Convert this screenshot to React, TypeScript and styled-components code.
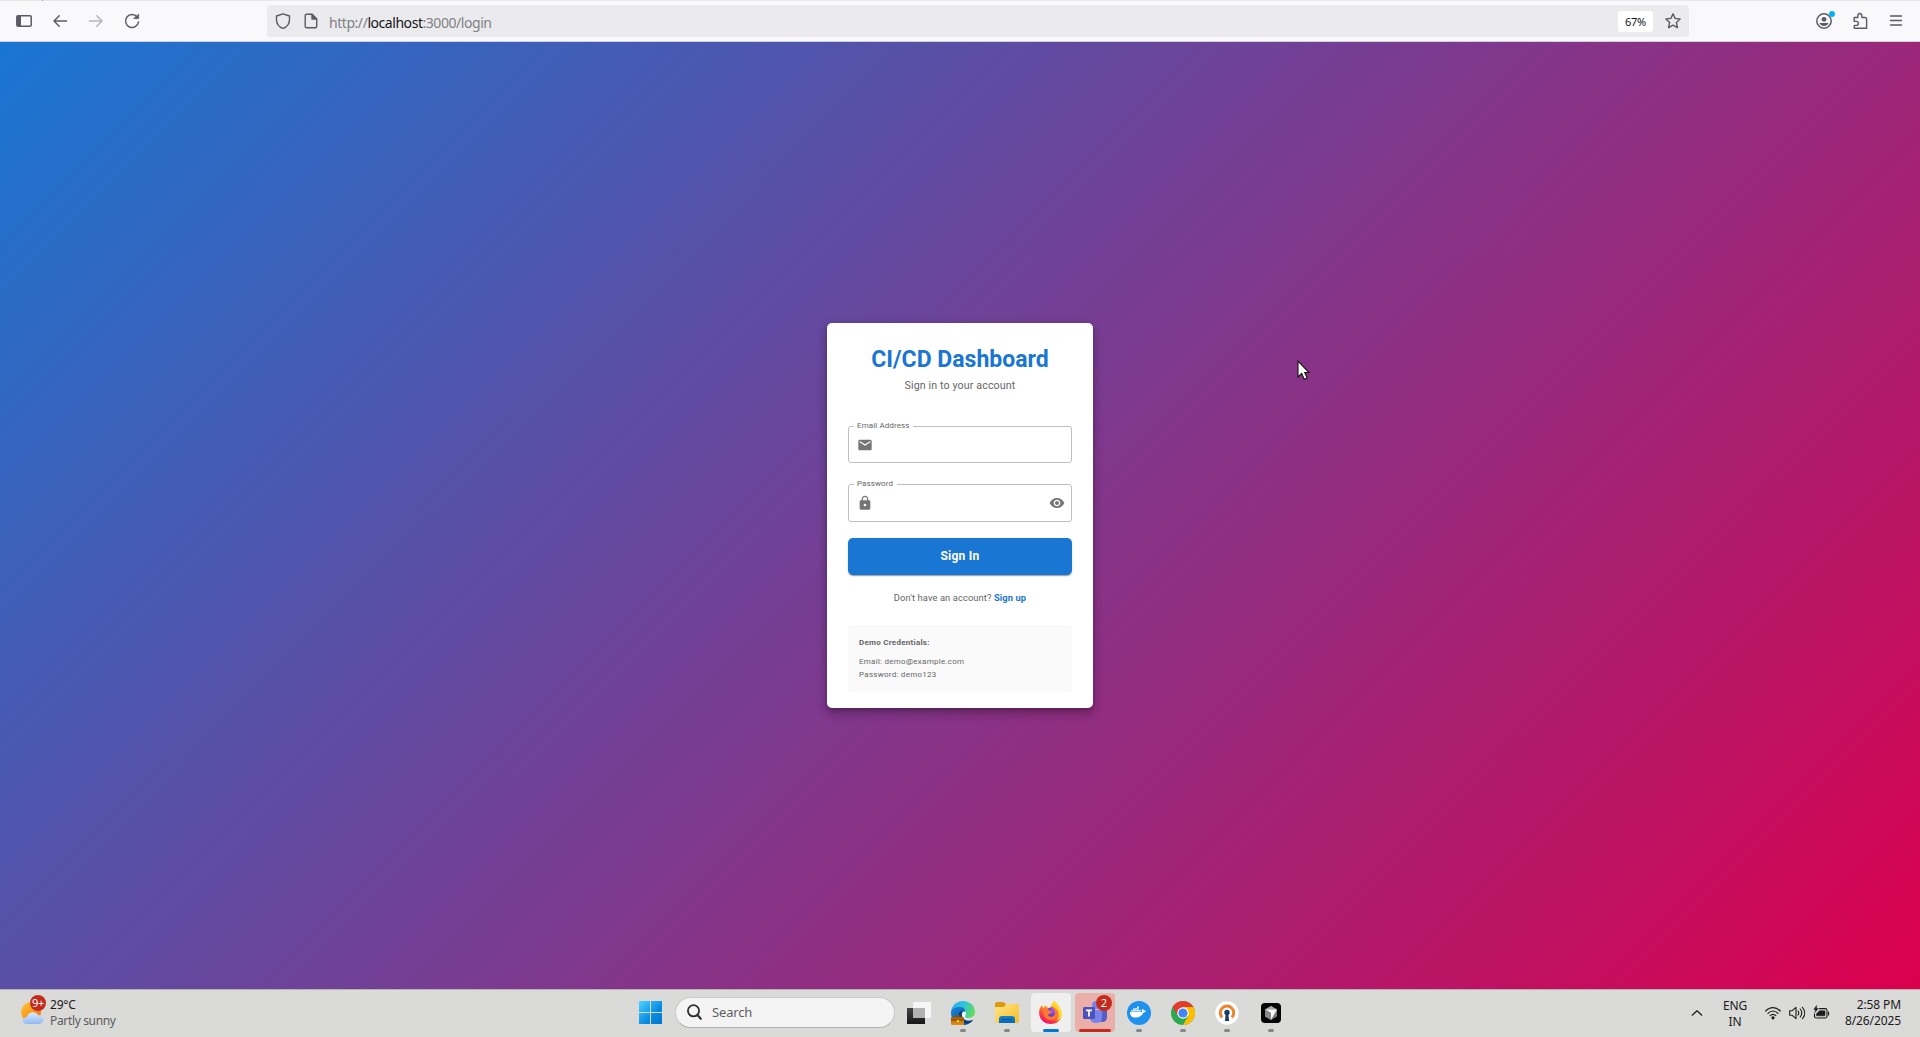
import React from 'react';
import styled, { createGlobalStyle } from 'styled-components';
import { MdEmail, MdLock, MdVisibility } from 'react-icons/md';
import { FaDocker } from 'react-icons/fa';

const Global = createGlobalStyle`
  * { box-sizing: border-box; }
  body { margin: 0; overflow: hidden; font-family: "Noto Sans", "Open Sans", sans-serif; }
  svg { display: block; flex: none; overflow: visible; }
`;

const Desktop = styled.div`
  display: flex;
  flex-direction: column;
  width: 1920px;
  height: 1037px;
  position: relative;
`;

/* ---------- browser toolbar ---------- */
const Toolbar = styled.header`
  display: flex;
  align-items: center;
  height: 42px;
  padding: 1px 14px 0;
  background:
    linear-gradient(#a8a8ad, #a8a8ad) 42px 0 / 1px 1px no-repeat,
    linear-gradient(#e8e8ec, #e8e8ec) 0 0 / 100% 1px no-repeat,
    #f9f9fb;
  border-bottom: 1px solid #d2d2d8;
  color: #5b5b66;
`;
const NavGroup = styled.div`
  display: flex;
  gap: 16px;
  width: 253px;
`;
const NavIcon = styled.span<{ $dim?: boolean }>`
  display: grid;
  place-items: center;
  width: 20px;
  height: 20px;
  opacity: ${p => (p.$dim ? 0.42 : 1)};
`;
const UrlBar = styled.div`
  display: flex;
  align-items: center;
  width: 1422px;
  height: 32px;
  padding: 0 8px;
  border-radius: 4px;
  background: #ebebed;
`;
const UrlIcons = styled.div`
  display: flex;
  gap: 12px;
  width: 54px;
`;
const Url = styled.span`
  flex: 1;
  color: #818187;
  font-size: 14px;
  line-height: 20px;
  letter-spacing: -0.45px;
  padding-top: 3px;
  white-space: nowrap;
  b { font-weight: 400; color: #15141a; }
`;
const ZoomLevel = styled.span`
  width: 35px;
  height: 21px;
  margin-right: 12px;
  border-radius: 3px;
  background: #fff;
  color: #15141a;
  font-size: 11px;
  line-height: 22px;
  text-align: center;
  letter-spacing: -0.3px;
`;
const ToolActions = styled.div`
  display: flex;
  gap: 16px;
  margin-left: auto;
`;

/* ---------- login page ---------- */
const Page = styled.main`
  display: flex;
  justify-content: center;
  align-items: center;
  height: 947px;
  background: linear-gradient(135deg, #1976d2 0%, #dc004e 100%);
  font-family: Roboto, sans-serif;
`;
const Card = styled.section`
  display: flex;
  flex-direction: column;
  width: 266px;
  height: 385px;
  padding: 23px 21px 0;
  border-radius: 5px;
  background: #fff;
  box-shadow: 0 3px 4px -2px rgba(0,0,0,.2), 0 6px 8px 1px rgba(0,0,0,.16), 0 2px 10px 1px rgba(0,0,0,.13);
`;
const Title = styled.h1`
  margin: 0;
  color: #1976d2;
  font-size: 23px;
  line-height: 28px;
  font-weight: 700;
  text-align: center;
  white-space: nowrap;
`;
const Subtitle = styled.p`
  margin: 4px 0 32px;
  color: #666;
  font-size: 10.67px;
  line-height: 16px;
  letter-spacing: 0.12px;
  text-align: center;
`;
const Field = styled.div<{ $height: number }>`
  display: flex;
  justify-content: space-between;
  align-items: center;
  position: relative;
  height: ${p => p.$height}px;
  padding: 0 6px 0 8px;
  margin-bottom: 21px;
  border: 1px solid #c0c0c0;
  border-radius: 3px;
  color: #757575;
`;
const FieldLabel = styled.label`
  position: absolute;
  top: -7px;
  left: 5px;
  padding: 0 4px 0 3px;
  background: #fff;
  color: #666;
  font-size: 8px;
  line-height: 12px;
  letter-spacing: 0.1px;
  white-space: nowrap;
`;
const SubmitButton = styled.button`
  height: 37px;
  margin: -5px 0 0;
  padding: 0 0 2px;
  border: 0;
  border-radius: 5px;
  background: #1976d2;
  box-shadow: 0 2px 1px -1px rgba(0,0,0,.2), 0 1px 1px rgba(0,0,0,.14), 0 1px 3px rgba(0,0,0,.12);
  color: #fff;
  font: 700 12px/18px Roboto, sans-serif;
  letter-spacing: 0.25px;
`;
const SignUpLine = styled.p`
  margin: 16px 0 20px;
  color: #666;
  font-size: 9.33px;
  line-height: 14px;
  letter-spacing: 0.1px;
  text-align: center;
  b { color: #1976d2; }
`;
const DemoBox = styled.div`
  height: 67px;
  padding: 11px;
  border-radius: 3px;
  background: #fafafa;
  color: #666;
  font-size: 8px;
  line-height: 13px;
  letter-spacing: 0.26px;
`;
const DemoHeading = styled.div`
  font-weight: 700;
  margin-bottom: 6px;
`;

/* ---------- taskbar ---------- */
const Taskbar = styled.footer`
  display: flex;
  align-items: center;
  justify-content: space-between;
  position: relative;
  height: 48px;
  padding-bottom: 2px;
  border-top: 1px solid #b4b1b2;
  background: #dadad9;
  color: #1b1b1b;
`;
const Weather = styled.div`
  display: flex;
  gap: 3px;
  width: 628px;
  padding: 0 0 1px 20px;
`;
const WeatherText = styled.div`
  font-size: 12px;
  line-height: 16px;
  letter-spacing: -0.2px;
  padding-top: 2px;
  span { display: block; color: #5c5c5c; letter-spacing: -0.35px; }
`;
const Apps = styled.div`
  display: flex;
  align-items: center;
  flex: 1;
  height: 45px;
`;
const AppButton = styled.div<{ $bg?: string }>`
  display: flex;
  align-items: center;
  justify-content: center;
  position: relative;
  width: 40px;
  height: 39px;
  margin: 0 2px;
  border-radius: 4px;
  background: ${p => p.$bg || 'transparent'};
`;
const Running = styled.i<{ $w?: number; $c?: string }>`
  position: absolute;
  bottom: 0;
  left: calc(50% - ${p => (p.$w || 6) / 2}px);
  width: ${p => p.$w || 6}px;
  height: 3px;
  border-radius: 2px;
  background: ${p => p.$c || '#868686'};
`;
const Badge = styled.span`
  position: absolute;
  top: 2px;
  right: 3px;
  width: 16px;
  height: 16px;
  border-radius: 50%;
  background: #c42b1c;
  color: #fff;
  font-size: 11px;
  line-height: 16px;
  text-align: center;
`;
const WeatherIcon = styled.div`
  position: relative;
  width: 27px;
  height: 34px;
`;
const WeatherBadge = styled(Badge)`
  top: 0;
  right: 1px;
  font-size: 11px;
  letter-spacing: -0.3px;
`;
const Search = styled.div`
  display: flex;
  align-items: center;
  gap: 10px;
  width: 220px;
  height: 31px;
  margin: 0 2px 0 3px;
  padding: 0 11px 1px;
  border: 1px solid #c9c9c9;
  border-bottom-color: #b2b2b2;
  border-radius: 16px;
  background: #f4f4f4;
  color: #5e5e5e;
  font-size: 13px;
  letter-spacing: -0.15px;
`;
const Tray = styled.div`
  display: flex;
  align-items: center;
  width: 231px;
  padding-right: 19px;
  font-size: 12px;
  line-height: 16px;
`;
const Chevron = styled.span`
  margin-left: 1px;
`;
const Language = styled.div`
  width: 40px;
  margin: 2px 10px 0 11px;
  text-align: center;
  letter-spacing: -0.2px;
`;
const Status = styled.div`
  display: flex;
  gap: 8px;
`;
const Clock = styled.div`
  flex: 1;
  text-align: right;
  letter-spacing: -0.1px;
  white-space: nowrap;
`;
const Pointer = styled.svg`
  position: absolute;
  left: 1297px;
  top: 360px;
`;

const Line = ({ size = 16, w = 1.4, children }: { size?: number; w?: number; children: React.ReactNode }) => (
  <svg width={size} height={size} viewBox="0 0 16 16" fill="none" stroke="currentColor" strokeWidth={w} strokeLinecap="round" strokeLinejoin="round">{children}</svg>
);

const EdgeIcon = () => (
  <svg width="26" height="26" viewBox="0 0 26 26">
    <defs>
      <linearGradient id="edgeTop" x1="0" x2="1" y1=".2" y2=".5"><stop stopColor="#28a9ee" /><stop offset=".5" stopColor="#2dc3dc" /><stop offset="1" stopColor="#65dc5d" /></linearGradient>
      <linearGradient id="edgeLow" x1="0" x2="1" y2="1"><stop stopColor="#1687d9" /><stop offset="1" stopColor="#0b4388" /></linearGradient>
      <linearGradient id="caseGold" x1="0" x2="0" y1="0" y2="1"><stop stopColor="#9e5906" /><stop offset=".4" stopColor="#c77708" /><stop offset="1" stopColor="#e09017" /></linearGradient>
    </defs>
    <path d="M1 13C1 6 6 1 13 1s12 5 12 11c0 4-3 6-7 6-3 0-5-1-4-3 1-5-6-7-10-4-2 1-3 2-3 2z" fill="url(#edgeTop)" />
    <path d="M1 13c0-4 4-6 8-6 5 0 7 3 6 6-4-1-6 3-3 6 3 4 9 2 11 1-2 3-6 5-10 5C6 25 1 20 1 13z" fill="url(#edgeLow)" />
    <path d="M9 13c-1 4 1 9 6 10 4 1 7-1 8-3-5 2-10 0-11-4 0-2 1-3 2-4-2-1-4-1-5 1z" fill="#083c76" />
    <path d="M12 15c-1-3 3-5 4-2 0 2-1 3-1 4 1 1 2 1 3 1-3 1-6 0-6-3z" fill="#e7f4fa" />
    <path d="M5 18v-2h5v2" fill="none" stroke="#89500b" strokeWidth="1.2" />
    <rect x="1" y="17" width="13" height="8" rx="1" fill="url(#caseGold)" /><path d="M1 20h13" stroke="#754007" /><rect x="7" y="20" width="2" height="2" fill="#ffdb1c" />
  </svg>
);
const FolderIcon = () => (
  <svg width="24" height="24" viewBox="0 0 24 24">
    <defs><linearGradient id="folder" x1="0" x2="1" y1="0" y2="1"><stop stopColor="#ffe48b" /><stop offset="1" stopColor="#f9bd20" /></linearGradient><linearGradient id="tray" x1="0" x2="0" y1="0" y2="1"><stop stopColor="#1184d4" /><stop offset="1" stopColor="#0b66b6" /></linearGradient></defs>
    <path d="M0 3q0-2 2-2h6l3 2h11q2 0 2 2v5H0z" fill="#dc9b0d" />
    <path d="M0 6h8q2 0 3-3h11q2 0 2 2v15q0 2-2 2H2q-2 0-2-2z" fill="url(#folder)" />
    <path d="M4 22v-4q0-3 3-3h10q3 0 3 3v4z" fill="url(#tray)" /><path d="M7 18.5h10" stroke="#0a5593" strokeWidth="1.2" />
  </svg>
);
const FirefoxIcon = () => (
  <svg width="24" height="24" viewBox="0 0 24 24">
    <defs><linearGradient id="fox" x1=".8" x2=".25" y1="0" y2="1"><stop stopColor="#fff13a" /><stop offset=".35" stopColor="#ffb51c" /><stop offset=".65" stopColor="#ff5034" /><stop offset="1" stopColor="#ed0872" /></linearGradient><radialGradient id="globe" cx=".6" cy=".3"><stop stopColor="#a756f6" /><stop offset="1" stopColor="#5541ba" /></radialGradient></defs>
    <path d="M15 0c3 2 4 4 5 6 6 8 1 17-8 17S-2 15 1 7l2-3 1 3 3-3c0 2 2 3 4 3 1-3 2-5 4-7z" fill="url(#fox)" />
    <circle cx="12.5" cy="12" r="5.7" fill="url(#globe)" />
    <path d="M4 8c3-1 5 0 7 2l2 1c-1 2-3 1-4 3 2 3 7 2 7-2 0-3-2-5-4-5 4-1 7 2 7 6 0 4-3 6-7 6-5 0-9-4-8-11z" fill="#ff7935" />
    <path d="M15 0c0 4 5 7 5 13 0 4-2 6-4 7 7-1 9-8 4-14-1-2-2-4-5-6z" fill="#ffdb32" />
  </svg>
);
const TeamsIcon = () => (
  <svg width="24" height="24" viewBox="0 0 24 24">
    <circle cx="13" cy="4" r="4" fill="#7b83eb" /><circle cx="20" cy="6" r="3" fill="#5059c9" />
    <path d="M15 9h9v7q0 5-5 5h-4z" fill="#555fca" /><path d="M7 9h12v8q0 5-6 5t-6-5z" fill="#7b83eb" />
    <rect x="0" y="6" width="12" height="12" rx="1.2" fill="#4b53bc" /><path d="M3 9.3h6M6 9.3v6.2" stroke="#fff" strokeWidth="1.7" />
  </svg>
);
const ChromeIcon = () => (
  <svg width="24" height="24" viewBox="0 0 24 24">
    <circle cx="12" cy="12" r="12" fill="#2da94f" /><path d="M1.6 6A12 12 0 0 1 22.4 6H12L7 15z" fill="#e33b2e" /><path d="M12 6h10.4A12 12 0 0 1 12 24l5.2-9z" fill="#fdbd00" /><circle cx="12" cy="12" r="5.8" fill="#fff" /><circle cx="12" cy="12" r="4.6" fill="#4285f4" />
  </svg>
);
const VpnIcon = () => (
  <svg width="24" height="24" viewBox="0 0 24 24"><circle cx="12" cy="12" r="11.7" fill="#fff" /><path d="M7.2 16.4A6.7 6.7 0 1 1 16.8 16.4" fill="none" stroke="#ed8533" strokeWidth="3" /><circle cx="12" cy="11.5" r="2.7" fill="#183b66" /><path d="m10.8 12-.9 8h4.2l-.9-8z" fill="#183b66" /></svg>
);
const CubeIcon = () => (
  <svg width="20" height="20" viewBox="0 0 20 20"><rect width="20" height="20" rx="4" fill="#050505" /><path d="m10 3 6 3.5v7L10 17l-6-3.5v-7z" fill="#777" /><path d="m4 6.5 6-3.5 6 3.5z" fill="#aaa" /><path d="M4 6.5h12L10 17v-7z" fill="#f5f5f5" /><path d="m4 6.5 6 3.5v7l-6-3.5z" fill="#898989" /></svg>
);

export default function App() {
  return (
    <Desktop>
      <Global />
      <Toolbar>
        <NavGroup>
          <NavIcon><svg width="16" height="12" viewBox="0 0 16 12"><rect x=".8" y=".8" width="14.4" height="10.4" rx="1.3" fill="none" stroke="currentColor" strokeWidth="1.5" /><path d="M1 1h4v10H1z" fill="currentColor" /></svg></NavIcon>
          <NavIcon><Line w={1.5}><path d="M14.5 8H2M7.2 2.8 2 8l5.2 5.2" /></Line></NavIcon>
          <NavIcon $dim><Line w={1.5}><path d="M1.5 8H14M8.8 2.8 14 8l-5.2 5.2" /></Line></NavIcon>
          <NavIcon><Line w={1.5}><path d="M13.2 4A6.5 6.5 0 1 0 14.5 9" /><path d="M14.6 1.5v4H10z" fill="currentColor" strokeWidth=".8" /></Line></NavIcon>
        </NavGroup>
        <UrlBar>
          <UrlIcons>
            <Line><path d="M8 .8 14.5 3v3.5C14.5 10.5 12 14 8 15.3 4 14 1.5 10.5 1.5 6.5V3z" /></Line>
            <Line><path d="M3.5 1.3H9L13.7 6v7.2q0 1.5-1.5 1.5H3.7q-1.5 0-1.5-1.5V2.8q0-1.5 1.3-1.5z" /><path d="M9 1.3V6h4.7z" fill="currentColor" /></Line>
          </UrlIcons>
          <Url>http://<b>localhost</b>:3000/login</Url>
          <ZoomLevel>67%</ZoomLevel>
          <Line><path d="m8 .8 2.1 4.6 5 .6-3.7 3.4 1 5.3L8 12.2l-4.4 2.5 1-5.3L.9 6l5-.6z" /></Line>
        </UrlBar>
        <ToolActions>
          <NavIcon><svg width="20" height="20" viewBox="0 0 20 20"><circle cx="10" cy="10" r="7.2" fill="none" stroke="currentColor" strokeWidth="1.5" /><circle cx="10" cy="8.3" r="2.4" fill="currentColor" /><path d="M5.5 12h9c-1 4-8 4-9 0z" fill="currentColor" /><circle cx="18" cy="3" r="3" fill="#00b3f4" /></svg></NavIcon>
          <NavIcon><Line><path d="M2.2 4.5h3.6V2.8c0-3 4-3 4 0v1.7h3.3q1.5 0 1.5 1.5v9.2H2.3v-2.8H4c3.2 0 3.2-4 0-4H2.2z" /></Line></NavIcon>
          <NavIcon><Line><path d="M2.5 3h11M2.5 7.5h11M2.5 12h11" /></Line></NavIcon>
        </ToolActions>
      </Toolbar>
      <Page>
        <Card>
          <Title>CI/CD Dashboard</Title>
          <Subtitle>Sign in to your account</Subtitle>
          <Field $height={37}><FieldLabel>Email Address</FieldLabel><MdEmail size={16} /></Field>
          <Field $height={38}><FieldLabel>Password</FieldLabel><MdLock size={16} /><MdVisibility size={16} /></Field>
          <SubmitButton>Sign In</SubmitButton>
          <SignUpLine>Don't have an account? <b>Sign up</b></SignUpLine>
          <DemoBox>
            <DemoHeading>Demo Credentials:</DemoHeading>
            <div>Email: demo@example.com</div>
            <div>Password: demo123</div>
          </DemoBox>
        </Card>
      </Page>
      <Taskbar>
        <Weather>
          <WeatherIcon>
            <svg width="27" height="34" viewBox="0 0 27 34">
              <defs><linearGradient id="sun" x1="0" x2="1" y1="0" y2="1"><stop stopColor="#ffc735" /><stop offset="1" stopColor="#f36c0a" /></linearGradient><linearGradient id="cloud" x1="0" x2="0" y1="0" y2="1"><stop stopColor="#d9ecff" /><stop offset="1" stopColor="#91b9f2" /></linearGradient></defs>
              <circle cx="11" cy="17" r="10" fill="url(#sun)" /><path d="M7 29c-6 0-5-7 0-7 1-6 9-6 11-2 7 0 7 9 0 9z" fill="url(#cloud)" />
            </svg>
            <WeatherBadge>9+</WeatherBadge>
          </WeatherIcon>
          <WeatherText>29°C<span>Partly sunny</span></WeatherText>
        </Weather>
        <Apps>
          <AppButton>
            <svg width="23" height="23" viewBox="0 0 23 23"><defs><linearGradient id="win" gradientUnits="userSpaceOnUse" x1="0" x2="23" y1="0" y2="23"><stop stopColor="#4ed2ff" /><stop offset=".6" stopColor="#098be0" /><stop offset="1" stopColor="#0075ce" /></linearGradient></defs><path d="M0 0h11v11H0zM12 0h11v11H12zM0 12h11v11H0zM12 12h11v11H12z" fill="url(#win)" /></svg>
          </AppButton>
          <Search>
            <svg width="15" height="16" viewBox="0 0 15 16" fill="none" stroke="#303030" strokeWidth="1.8" strokeLinecap="round"><circle cx="6.5" cy="6.8" r="5.6" /><path d="m10.5 11 3.3 3.7" strokeWidth="2.2" /></svg>
            Search
          </Search>
          <AppButton><svg width="24" height="24" viewBox="0 0 24 24"><defs><linearGradient id="dark" x2="0" y2="1"><stop stopColor="#444" /><stop offset="1" stopColor="#171717" /></linearGradient></defs><path d="M0 7h18v16H0z" fill="url(#dark)" /><path d="M6 1h18v16H6z" fill="#fff" opacity=".75" /><path d="M6 7h12v10H6z" fill="#aaa" opacity=".8" /></svg></AppButton>
          <AppButton><EdgeIcon /><Running /></AppButton>
          <AppButton><FolderIcon /><Running /></AppButton>
          <AppButton $bg="#efefef"><FirefoxIcon /><Running $w={16} $c="#0078d4" /></AppButton>
          <AppButton $bg="#eaafa9"><TeamsIcon /><Running $w={32} $c="#c42b1c" /><Badge>2</Badge></AppButton>
          <AppButton><svg width="24" height="24"><circle cx="12" cy="12" r="12" fill="#1d91ed" /><FaDocker x="3" y="3" width="18" height="18" color="#fff" /></svg><Running /></AppButton>
          <AppButton><ChromeIcon /><Running /></AppButton>
          <AppButton><VpnIcon /><Running /></AppButton>
          <AppButton><CubeIcon /><Running /></AppButton>
        </Apps>
        <Tray>
          <Chevron><Line size={14}><path d="m2.5 10.5 5.5-5 5.5 5" /></Line></Chevron>
          <Language>ENG<br />IN</Language>
          <Status>
            <Line w={1.2}><path d="M.8 6c4-4.5 10.4-4.5 14.4 0M3 8.4c3-3.2 7-3.2 10 0M5.2 10.7c1.8-1.8 3.8-1.8 5.6 0" /><circle cx="8" cy="12.8" r="1" fill="currentColor" /></Line>
            <Line w={1.1}><path d="M.7 5.7h2.5L7 2.4v11.2l-3.8-3.3H.7zM9 6c1 1.3 1 2.7 0 4M11.2 4c2 2.5 2 5.5 0 8M13.4 2.3c3 3.5 3 8 0 11.4" /></Line>
            <Line w={1.1}><path d="M6.5 3.6h5.7q1.8 0 1.8 1.8v5.8q0 1.8-1.8 1.8H3.3q-1.8 0-1.8-1.8V8.8M15.6 7v3" /><path d="M6.6 5.8h4.8q.6 0 .6.6v3.8q0 .6-.6.6H4.1q-.6 0-.6-.6V9z" fill="currentColor" strokeWidth=".6" /><path d="M3.4.8.8 4.4h1.8L1.9 7.4 5.4 3.4H3.6z" fill="currentColor" strokeWidth=".5" /></Line>
          </Status>
          <Clock>2:58 PM<br />8/26/2025</Clock>
        </Tray>
      </Taskbar>
      <Pointer width="14" height="22" viewBox="0 0 14 22"><path d="M1 1v16l3.7-3.5 2.5 5.8 3-1.3-2.5-5.5H12z" fill="#fff" stroke="#111" strokeWidth="1.1" /></Pointer>
    </Desktop>
  );
}
